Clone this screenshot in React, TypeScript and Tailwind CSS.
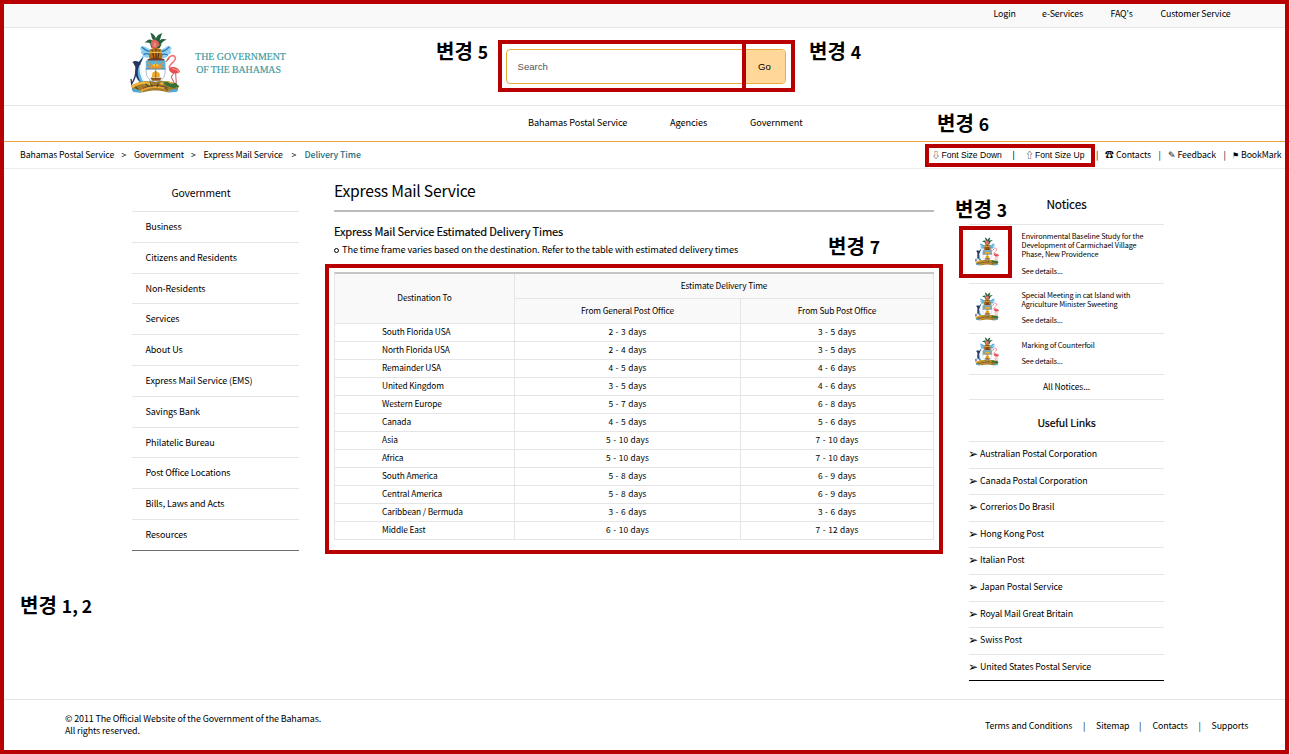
import type { ReactNode } from "react";

const sidebar = [
  "Business",
  "Citizens and Residents",
  "Non-Residents",
  "Services",
  "About Us",
  "Express Mail Service (EMS)",
  "Savings Bank",
  "Philatelic Bureau",
  "Post Office Locations",
  "Bills, Laws and Acts",
  "Resources",
];

const rows = [
  ["South Florida USA", "2 - 3 days", "3 - 5 days"],
  ["North Florida USA", "2 - 4 days", "3 - 5 days"],
  ["Remainder USA", "4 - 5 days", "4 - 6 days"],
  ["United Kingdom", "3 - 5 days", "4 - 6 days"],
  ["Western Europe", "5 - 7 days", "6 - 8 days"],
  ["Canada", "4 - 5 days", "5 - 6 days"],
  ["Asia", "5 - 10 days", "7 - 10 days"],
  ["Africa", "5 - 10 days", "7 - 10 days"],
  ["South America", "5 - 8 days", "6 - 9 days"],
  ["Central America", "5 - 8 days", "6 - 9 days"],
  ["Caribbean / Bermuda", "3 - 6 days", "3 - 6 days"],
  ["Middle East", "6 - 10 days", "7 - 12 days"],
];

const links = [
  "Australian Postal Corporation",
  "Canada Postal Corporation",
  "Correrios Do Brasil",
  "Hong Kong Post",
  "Italian Post",
  "Japan Postal Service",
  "Royal Mail Great Britain",
  "Swiss Post",
  "United States Postal Service",
];

const notices = [
  {
    lines: ["Environmental Baseline Study for the", "Development of Carmichael Village", "Phase, New Providence"],
    height: "h-[59px]",
  },
  { lines: ["Special Meeting in cat Island with", "Agriculture Minister Sweeting"], height: "h-[50px]" },
  { lines: ["Marking of Counterfoil"], height: "h-[41px]" },
];

function Crest({ className }: { className: string }) {
  return (
    <svg viewBox="14 12 148 186" preserveAspectRatio="none" className={className} aria-hidden="true">
      {/* mantling */}
      <path d="M76 62C66 66 60 50 48 56c-6 4-4 10 2 11-6 4-4 12 4 14 0 8 10 10 22 6l14-4 14 6c12 4 22 0 22-8 10-2 12-10 6-14 8-2 6-10-2-12-10-4-12 12-26 8z" fill="#8fd0f0" />
      <path d="M48 56c8 6 14 14 24 14M54 80c8-6 14-4 22 2M130 56c-6 8-14 14-22 14M126 82c-8-6-14-4-20 0" stroke="#2d79b5" strokeWidth="4" fill="none" />
      {/* plume and conch */}
      <path d="M88 46C76 28 66 34 58 44c10-2 16 0 22 8zM86 42C74 24 78 20 74 14c12 4 18 14 18 26zM90 40c0-14 8-22 20-24-6 8-4 18-12 28zM96 48c4-14 14-18 28-12-10 0-16 8-20 16zM72 46c6 8 26 10 36 2l-6 12H78z" fill="#24623d" />
      <path d="M76 44c0-8 10-11 15-8s11 7 8 15-7 11-13 11-10-9-10-18z" fill="#dd6258" />
      <path d="M84 44l8 6M83 51l8 4" stroke="#ffac93" strokeWidth="3" />
      {/* helmet */}
      <path d="M74 66c4-8 28-8 32 0l4 18c0 9-9 15-20 15s-20-6-20-15z" fill="#b56c13" />
      <path d="M80 68l5 22M91 64v27M101 68l-5 22" stroke="#472c1a" strokeWidth="3" />
      <path d="M73 73h34" stroke="#f3bd47" strokeWidth="4" />
      <path d="M66 94c10-5 40-5 50 0v6H66z" fill="#6f3c2a" />
      {/* shield */}
      <path d="M62 99h56v32c0 20-12 28-28 34-16-6-28-14-28-34z" fill="#fff" stroke="#8aa0b5" strokeWidth="2" />
      <path d="M62 98h56v26H62z" fill="#58b1d9" />
      <path d="M74 122a16 15 0 0 1 32 0z" fill="#f8c12f" />
      <path d="M90 122V99M90 122L68 104M90 122l22-18M90 122L66 115M90 122l24-7" stroke="#e9912e" strokeWidth="4" />
      <path d="M60 123h60" stroke="#3a6aa0" strokeWidth="2" />
      <path d="M78 149l3-16 8-3v16zM90 128l12 8v12H90z" fill="#e9a92c" />
      <path d="M74 149h34l-6 9H80z" fill="#90551c" />
      <path d="M90 126v26" stroke="#603b1d" strokeWidth="2" />
      <path d="M70 159q20 7 40 0" stroke="#5bafd7" strokeWidth="3" fill="none" />
      {/* marlin */}
      <path d="M57 70c-2 14-6 22-12 34-4 12-4 26 4 48l12 22c-24-10-34-28-32-52 2-18 18-24 22-38z" fill="#62b8e5" />
      <path d="M55 84c-6 20-18 30-18 48 0 14 4 22 10 32-14-10-20-26-16-46 2-14 18-22 24-34z" fill="#233a67" />
      <path d="M21 102c10-6 21-2 26 8-10-2-12 6-11 17-6-8-9-19-15-25z" fill="#273562" />
      <path d="M33 124c-2 20-6 31-14 44l-2-15" fill="none" stroke="#30315f" strokeWidth="4" />
      <path d="M49 110c-6 18 0 38 10 54" stroke="#e6f7ff" strokeWidth="4" fill="none" />
      {/* flamingo */}
      <path d="M127 96c0-12 16-18 21-8 4 10-14 18-17 27-2 8 4 8 10 11" fill="none" stroke="#ed7980" strokeWidth="5" />
      <path d="M128 91l-7 10" stroke="#a84749" strokeWidth="3" />
      <path d="M132 119c10-5 27 0 30 13-6 5-20 7-28 0-5-5-6-10-2-13z" fill="#e84e51" />
      <path d="M139 122c10 0 16 4 20 10" stroke="#ff9c9b" strokeWidth="3" fill="none" />
      <path d="M144 134l-8 13 10 20M149 134l2 32" fill="none" stroke="#c95c62" strokeWidth="3" />
      {/* base */}
      <path d="M18 174c20-16 50-16 72-12 24-6 54-2 68 12l-4 15-30 4c-20-7-50-7-70 0l-32-4z" fill="#a27a28" />
      <path d="M20 177c18-12 38-16 58-8M104 168c20-8 38-2 51 9" stroke="#f4b63e" strokeWidth="7" fill="none" />
      <path d="M44 191c22-18 68-20 88 0" stroke="#e8a53c" strokeWidth="6" fill="none" />
      <path d="M52 181c20-10 54-12 74 0" stroke="#6a4c2b" strokeWidth="3" fill="none" />
      <path d="M18 182l20 2 12 11-26-3zM126 194l12-10 18-2-3 9z" fill="#54a8d4" />
      <path d="M110 164l14-3 12 6 14-3 10 13-18 3-18-6z" fill="#357039" />
      <path d="M60 167l10 10M74 164l6 12M98 165l-4 12M30 176l8 9M116 180l12 8" stroke="#3a4b31" strokeWidth="3" />
    </svg>
  );
}

function Note({ className, num }: { className: string; num: string }) {
  return (
    <div className={`absolute flex items-baseline whitespace-nowrap text-[20px] leading-[24px] font-bold tracking-normal ${className}`}>
      변경<span className="ml-[5px] text-[17.5px]">{num}</span>
    </div>
  );
}

function Cell({ w, children, className = "" }: { w: string; children: ReactNode; className?: string }) {
  return <span className={`shrink-0 whitespace-nowrap ${w} ${className}`}>{children}</span>;
}

export default function App() {
  return (
    <div className="relative flex h-[754px] w-[1290px] flex-col overflow-hidden bg-white font-['Noto_Sans_CJK_KR','Noto_Sans',sans-serif] text-[9px] leading-[12px] tracking-[-0.013em] text-black">
      <div className="flex h-[28px] shrink-0 border-b border-[#e5e5e5] bg-[#f9f9f9] pt-[8px] pl-[993.5px] text-[8.85px]">
        <Cell w="w-[48.5px]">Login</Cell>
        <Cell w="w-[68.5px]">e-Services</Cell>
        <Cell w="w-[50px]">FAQ's</Cell>
        <Cell w="w-[80px]">Customer Service</Cell>
      </div>

      <header className="flex h-[78px] shrink-0 border-b border-[#e5e5e5]">
        <Crest className="mt-[4px] ml-[130px] h-[62px] w-[50px] shrink-0" />
        <div className="mt-[23px] ml-[14px] w-[93px] text-center font-['Liberation_Serif',serif] text-[9.9px] leading-[12.5px] tracking-[0] whitespace-nowrap text-[#3b979b] [-webkit-text-stroke:0.15px_#3b979b]">
          THE GOVERNMENT
          <br />
          <span className="mr-[4px] tracking-[-0.01em]">OF THE BAHAMAS</span>
        </div>
        <div className="mt-[21px] ml-[219px] flex h-[35px] w-[280px] overflow-hidden rounded-[4px] border border-[#eaaa3b] font-['Liberation_Sans',sans-serif] text-[9.6px] leading-[34px] tracking-normal">
          <div className="w-[239px] pl-[10.5px] text-[#555]">Search</div>
          <div className="flex-1 bg-[#ffd899] pl-[12px]">Go</div>
        </div>
      </header>

      <nav className="flex h-[36px] shrink-0 border-b border-[#eba53a] pt-[10px] pl-[528px] text-[9.22px]">
        <Cell w="w-[142px]">Bahamas Postal Service</Cell>
        <Cell w="w-[80px]">Agencies</Cell>
        <Cell w="w-[80px]">Government</Cell>
      </nav>

      <div className="flex h-[27px] shrink-0 border-b border-[#ececec] pt-[7px] pl-[20px] text-[8.75px]">
        <Cell w="w-[101.5px]">Bahamas Postal Service</Cell>
        <Cell w="w-[12.5px]">&gt;</Cell>
        <Cell w="w-[57px]">Government</Cell>
        <Cell w="w-[12.5px]">&gt;</Cell>
        <Cell w="w-[88px]">Express Mail Service</Cell>
        <Cell w="w-[13px]">&gt;</Cell>
        <Cell w="w-[627.5px]" className="font-medium tracking-[-0.01em] text-[#24707f]">Delivery Time</Cell>
        <div className="flex font-['Liberation_Sans','Noto_Sans_CJK_KR',sans-serif] text-[8.55px] tracking-normal">
          <Cell w="w-[9.5px]" className="font-['Noto_Sans_CJK_KR'] text-[8px]">⇩</Cell>
          <Cell w="w-[71px]">Font Size Down</Cell>
          <Cell w="w-[13px]">|</Cell>
          <Cell w="w-[9.5px]" className="font-['Noto_Sans_CJK_KR'] text-[8px]">⇧</Cell>
          <Cell w="w-[61px]">Font Size Up</Cell>
        </div>
        <Cell w="w-[9px]">|</Cell>
        <Cell w="w-[11px]">☎</Cell>
        <Cell w="w-[42.5px]">Contacts</Cell>
        <Cell w="w-[9px]">|</Cell>
        <Cell w="w-[10px]">✎</Cell>
        <Cell w="w-[46px]">Feedback</Cell>
        <Cell w="w-[8px]">|</Cell>
        <Cell w="w-[9.5px]" className="text-[7.5px]">⚑</Cell>
        <Cell w="w-[42px]">BookMark</Cell>
      </div>

      <div className="flex h-[530px] shrink-0">
        <aside className="ml-[132px] w-[167px] shrink-0">
          <h2 className="h-[42px] w-[138px] pt-[18px] text-center text-[10.35px]">Government</h2>
          <ul className="border-b border-[#6f6f6f]">
            {sidebar.map((s) => (
              <li key={s} className="h-[30.8px] border-t border-[#e5e5e5] pl-[13.5px] leading-[29px]">
                {s}
              </li>
            ))}
          </ul>
        </aside>

        <main className="ml-[35px] w-[600px] shrink-0">
          <h1 className="h-[43px] border-b-2 border-[#bcbcbc] pt-[12px] text-[15.7px] leading-[20px] tracking-[-0.015em]">Express Mail Service</h1>
          <h2 className="mt-[12px] text-[11.1px] leading-[14px] tracking-[-0.015em] [-webkit-text-stroke:0.15px_black]">
            Express Mail Service Estimated Delivery Times
          </h2>
          <p className="mt-[4px] text-[9.24px] leading-[14px] tracking-[-0.014em] whitespace-nowrap">
            <span className="mr-[3px] inline-block h-[5px] w-[5px] rounded-full border border-black align-[0px]" />
            The time frame varies based on the destination. Refer to the table with estimated delivery times
          </p>
          <table className="mt-[16px] w-[600px] table-fixed border-separate border-spacing-0 border-t-2 border-l border-t-[#c6c6c6] border-l-[#e5e5e5] text-center text-[8.35px]">
            <colgroup>
              <col className="w-[180px]" />
              <col className="w-[226px]" />
              <col className="w-[193px]" />
            </colgroup>
            <thead className="bg-[#f9f9f9] [&_th]:border-r [&_th]:border-b [&_th]:border-[#e5e5e5] [&_th]:px-0 [&_th]:pt-0 [&_th]:pb-[3px] [&_th]:font-normal">
              <tr className="h-[25px]">
                <th rowSpan={2}>Destination To</th>
                <th colSpan={2}>Estimate Delivery Time</th>
              </tr>
              <tr className="h-[25px]">
                <th>From General Post Office</th>
                <th>From Sub Post Office</th>
              </tr>
            </thead>
            <tbody className="[&_td]:border-r [&_td]:border-b [&_td]:border-[#e5e5e5] [&_td]:px-0 [&_td]:pt-0 [&_td]:pb-[3px]">
              {rows.map(([place, general, sub]) => (
                <tr key={place} className="h-[18px]">
                  <td>
                    <div className="pl-[47px] text-left">{place}</div>
                  </td>
                  <td className="tracking-[0.005em] [word-spacing:0.6px]">{general}</td>
                  <td className="tracking-[0.005em] [word-spacing:0.6px]">{sub}</td>
                </tr>
              ))}
            </tbody>
          </table>
        </main>

        <aside className="ml-[35px] w-[195px] shrink-0">
          <h2 className="h-[55px] pt-[28px] text-center text-[11.8px] leading-[14px] [-webkit-text-stroke:0.15px_black]">Notices</h2>
          {notices.map((n) => (
            <article key={n.lines[0]} className={`flex border-t border-[#e5e5e5] text-[7.3px] leading-[9.4px] ${n.height}`}>
              <div className="flex w-[52.5px] shrink-0 items-center pl-[6px]">
                <Crest className="-mt-[5px] h-[29px] w-[24px]" />
              </div>
              <div className="pt-[6.5px] whitespace-nowrap">
                {n.lines.map((l) => (
                  <p key={l}>{l}</p>
                ))}
                <p className="mt-[7px]">See details...</p>
              </div>
            </article>
          ))}
          <div className="h-[26px] border-y border-[#e5e5e5] text-center text-[8.5px] leading-[22px]">All Notices...</div>
          <h2 className="h-[41px] pt-[16px] text-center text-[10.6px] leading-[14px] [-webkit-text-stroke:0.2px_black]">Useful Links</h2>
          <ul className="border-b border-black text-[8.85px]">
            {links.map((l) => (
              <li key={l} className="flex h-[26.6px] border-t border-[#e5e5e5] leading-[24px]">
                <span className="-ml-[1px] w-[12px] text-[12px] leading-[22px]">➢</span>
                {l}
              </li>
            ))}
          </ul>
        </aside>
      </div>

      <footer className="flex h-[55px] shrink-0 border-t border-[#e5e5e5]">
        <p className="mt-[13px] ml-[65px] w-[920px] text-[8.95px] leading-[12px]">
          © 2011 The Official Website of the Government of the Bahamas.
          <br />
          All rights reserved.
        </p>
        <div className="mt-[20px] flex text-[8.8px]">
          <Cell w="w-[98px]">Terms and Conditions</Cell>
          <Cell w="w-[13px]">|</Cell>
          <Cell w="w-[43px]">Sitemap</Cell>
          <Cell w="w-[13.5px]">|</Cell>
          <Cell w="w-[46px]">Contacts</Cell>
          <Cell w="w-[13px]">|</Cell>
          <Cell w="w-[38px]">Supports</Cell>
        </div>
      </footer>

      <div className="pointer-events-none absolute top-0 left-0 h-[754px] w-[1289px] border-4 border-[#b80000]" />
      <div className="absolute top-[40px] left-[498px] h-[52px] w-[297px] border-4 border-[#b80000]" />
      <div className="absolute top-[44px] left-[742px] h-[44px] w-[4px] bg-[#b80000]" />
      <div className="absolute top-[144px] left-[925px] h-[23px] w-[170px] border-4 border-[#b80000]" />
      <div className="absolute top-[226px] left-[959px] h-[52px] w-[53px] border-4 border-[#b80000]" />
      <div className="absolute top-[264px] left-[325px] h-[290px] w-[618px] border-4 border-[#b80000]" />
      <Note className="top-[593px] left-[20px]" num="1, 2" />
      <Note className="top-[197px] left-[955px]" num="3" />
      <Note className="top-[39px] left-[809px]" num="4" />
      <Note className="top-[39px] left-[436px]" num="5" />
      <Note className="top-[111px] left-[937px]" num="6" />
      <Note className="top-[234px] left-[828px]" num="7" />
    </div>
  );
}
